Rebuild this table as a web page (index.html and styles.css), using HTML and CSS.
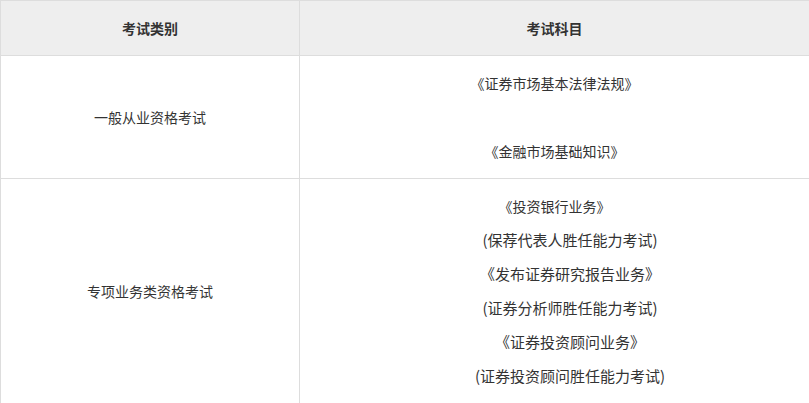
FILE: index.html
```html
<!DOCTYPE html>
<html lang="zh-CN">
<head>
<meta charset="utf-8">
<title>考试类别</title>
<link rel="stylesheet" href="styles.css">
</head>
<body>
<table class="exam-table">
  <colgroup>
    <col class="col-type">
    <col class="col-subject">
  </colgroup>
  <thead>
    <tr>
      <th>考试类别</th>
      <th>考试科目</th>
    </tr>
  </thead>
  <tbody>
    <tr>
      <td>一般从业资格考试</td>
      <td>
        <p>《证券市场基本法律法规》</p>
        <p class="blank">&nbsp;</p>
        <p>《金融市场基础知识》</p>
      </td>
    </tr>
    <tr>
      <td>专项业务类资格考试</td>
      <td>
        <p>《投资银行业务》</p>
        <p class="sub">(保荐代表人胜任能力考试)</p>
        <p class="sub">《发布证券研究报告业务》</p>
        <p class="sub">(证券分析师胜任能力考试)</p>
        <p class="sub">《证券投资顾问业务》</p>
        <p class="sub">(证券投资顾问胜任能力考试)</p>
      </td>
    </tr>
  </tbody>
</table>
</body>
</html>
```
FILE: styles.css
```css
html, body {
  margin: 0;
  padding: 0;
  overflow: hidden;
  background: #fff;
}

.exam-table {
  border-collapse: collapse;
  table-layout: fixed;
  width: 809px;
  font-family: "Noto Sans CJK SC", "Microsoft YaHei", sans-serif;
  font-size: 14px;
  color: #333;
}

.col-type { width: 299px; }
.col-subject { width: 510px; }

.exam-table th,
.exam-table td {
  border: 1px solid #ddd;
  text-align: center;
  vertical-align: middle;
}

.exam-table th {
  background: #eee;
  height: 54px;
  padding: 0;
  font-weight: bold;
  line-height: 20px;
}

.exam-table td {
  padding: 10px;
}

.exam-table p {
  margin: 0;
  line-height: 34px;
}

.exam-table p.sub {
  font-size: 15px;
  padding-left: 31px;
}
```
